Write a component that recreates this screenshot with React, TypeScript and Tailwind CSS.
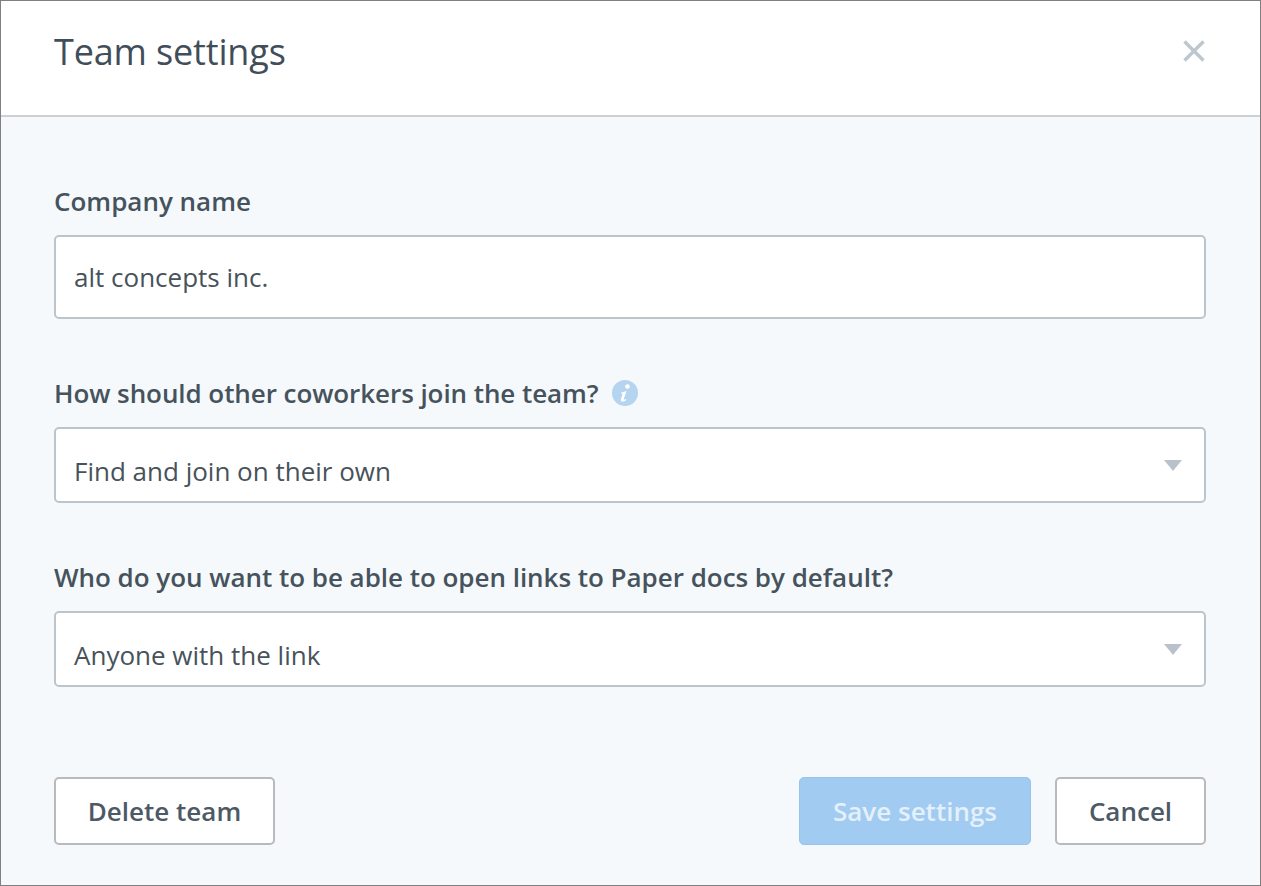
const font = "font-['Open_Sans',sans-serif]";

function Caret() {
  return (
    <svg width="18" height="11" viewBox="0 0 18 11" className="shrink-0">
      <path d="M0 0H18L9 11Z" fill="#b9c2ca" />
    </svg>
  );
}

function Select({ value }: { value: string }) {
  return (
    <div className="flex h-[76px] items-center justify-between rounded-[5px] border-2 border-[#bcc5cc] bg-white pr-[22px] pl-[18px]">
      <span className="relative top-[6px] text-[26px] text-[#47525b]">{value}</span>
      <Caret />
    </div>
  );
}

export default function App() {
  return (
    <div className={`${font} flex h-[886px] w-[1261px] flex-col border border-[#7f7f7f] bg-[#f5f9fc] text-[#46525c]`}>
      <header className="flex h-[116px] items-center justify-between border-b-2 border-[#ccd1d5] bg-white pr-[55px] pl-[53px]">
        <h1 className="relative top-[-6px] text-[36px] leading-none tracking-[-0.15px] text-[#414e59]">Team settings</h1>
        <svg width="22" height="22" viewBox="0 0 22 22" className="relative top-[-7px]">
          <path d="M1.5 1.5L20.5 20.5M20.5 1.5L1.5 20.5" stroke="#bdc7cd" strokeWidth="3.4" />
        </svg>
      </header>
      <main className="flex flex-1 flex-col pr-[54px] pl-[53px] pt-[67px]">
        <label className="text-[26px] leading-[34px] font-semibold">Company name</label>
        <div className="mt-[17px] flex h-[84px] items-center rounded-[5px] border-2 border-[#bcc5cc] bg-white pl-[18px] text-[26px] text-[#47525b]">
          alt concepts inc.
        </div>
        <label className="mt-[57px] flex items-center gap-[13px] text-[26px] leading-[34px] font-semibold tracking-[-0.07px]">
          How should other coworkers join the team?
          <svg width="26" height="26" viewBox="0 0 26 26">
            <circle cx="13" cy="13" r="13" fill="#b5d4f0" />
            <circle cx="15.5" cy="6.5" r="2.3" fill="#fff" />
            <path d="M9.5 12.5L14.5 11L11.8 19C11.6 19.8 12.5 20 13.8 19L14.4 20C12 22 8.2 22.3 8.8 19.5L10.6 14L9.3 13.8Z" fill="#fff" />
          </svg>
        </label>
        <div className="mt-[17px]">
          <Select value="Find and join on their own" />
        </div>
        <label className="mt-[57px] text-[26px] leading-[34px] font-semibold tracking-[-0.03px]">
          Who do you want to be able to open links to Paper docs by default?
        </label>
        <div className="mt-[17px]">
          <Select value="Anyone with the link" />
        </div>
        <footer className="mt-[90px] flex items-center justify-between">
          <button className="flex h-[68px] w-[221px] items-center justify-center rounded-[5px] border-2 border-[#b8babc] bg-white text-[26px] font-semibold text-[#4d5965]">
            Delete team
          </button>
          <div className="flex gap-[24px]">
            <button className="flex h-[68px] w-[232px] items-center justify-center rounded-[5px] border border-[#98c4ea] bg-[#a1cbf0] text-[26px] font-semibold text-[#e4f0fb]">
              Save settings
            </button>
            <button className="flex h-[68px] w-[151px] items-center justify-center rounded-[5px] border-2 border-[#b8babc] bg-white text-[26px] font-semibold text-[#4d5965]">
              Cancel
            </button>
          </div>
        </footer>
      </main>
    </div>
  );
}
